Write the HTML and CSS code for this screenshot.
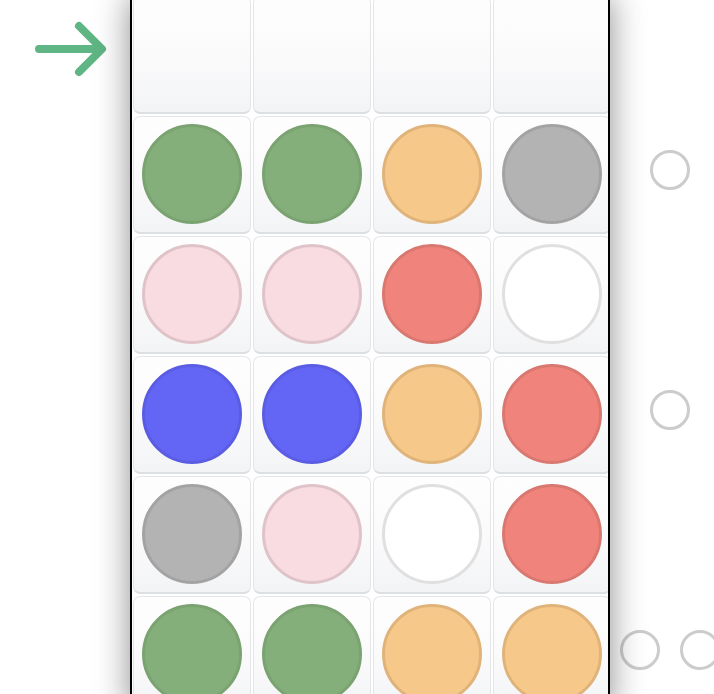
FILE: index.html
```html
<!DOCTYPE html>
<html lang="en">
<head>
<meta charset="utf-8">
<title>Mastermind</title>
<link rel="stylesheet" href="styles.css">
</head>
<body>
<div class="page">
  <div class="gutter">
    <svg class="arrow" width="80" height="60" viewBox="0 0 80 60" aria-hidden="true">
      <path d="M9 29 H71 M49 6 L72 29 L49 52" fill="none" stroke="#5fb583" stroke-width="8" stroke-linecap="round" stroke-linejoin="round"/>
    </svg>
  </div>
  <div class="board">
    <div class="grid">
      <div class="cell"></div><div class="cell"></div><div class="cell"></div><div class="cell"></div>

      <div class="cell"><span class="peg green"></span></div>
      <div class="cell"><span class="peg green"></span></div>
      <div class="cell"><span class="peg orange"></span></div>
      <div class="cell"><span class="peg gray"></span></div>

      <div class="cell"><span class="peg pink"></span></div>
      <div class="cell"><span class="peg pink"></span></div>
      <div class="cell"><span class="peg red"></span></div>
      <div class="cell"><span class="peg white"></span></div>

      <div class="cell"><span class="peg blue"></span></div>
      <div class="cell"><span class="peg blue"></span></div>
      <div class="cell"><span class="peg orange"></span></div>
      <div class="cell"><span class="peg red"></span></div>

      <div class="cell"><span class="peg gray"></span></div>
      <div class="cell"><span class="peg pink"></span></div>
      <div class="cell"><span class="peg white"></span></div>
      <div class="cell"><span class="peg red"></span></div>

      <div class="cell"><span class="peg green"></span></div>
      <div class="cell"><span class="peg green"></span></div>
      <div class="cell"><span class="peg orange"></span></div>
      <div class="cell"><span class="peg orange"></span></div>
    </div>
  </div>
  <div class="feedback">
    <div class="fb-row"></div>
    <div class="fb-row"><span class="hint"></span></div>
    <div class="fb-row"></div>
    <div class="fb-row"><span class="hint"></span></div>
    <div class="fb-row"></div>
    <div class="fb-row"><span class="hint"></span><span class="hint"></span></div>
  </div>
</div>
</body>
</html>
```

FILE: styles.css
```css
html, body {
  margin: 0;
  padding: 0;
  background: #ffffff;
  overflow: hidden;
  font-family: "Liberation Sans", Arial, sans-serif;
}

.page {
  display: flex;
  align-items: flex-start;
  width: 740px;
  margin-top: -4px;
}

.gutter {
  width: 130px;
  flex: none;
}

.arrow {
  display: block;
  margin: 24px 0 0 30px;
}

.board {
  flex: none;
  width: 476px;
  border-left: 2px solid #000;
  border-right: 2px solid #000;
  background: #ffffff;
  overflow: hidden;
  box-shadow: 0 0 32px rgba(0, 0, 0, 0.45);
  position: relative;
  z-index: 1;
}

.grid {
  display: grid;
  grid-template-columns: repeat(4, 118px);
  grid-auto-rows: 118px;
  gap: 2px;
  padding-left: 1px;
  width: 479px;
}

.cell {
  box-sizing: border-box;
  border: 1px solid #e3e5e9;
  border-bottom: 2px solid #dcdfe4;
  border-radius: 7px;
  background: linear-gradient(to bottom, #fefefe 0%, #fafafb 55%, #f3f4f6 100%);
  display: flex;
  align-items: center;
  justify-content: center;
}

.peg {
  box-sizing: border-box;
  width: 100px;
  height: 100px;
  border-radius: 50%;
  border: 3px solid;
  margin-bottom: 2px;
}

.green  { background: #84ae7a; border-color: #7ba372; }
.orange { background: #f6c98a; border-color: #dfb37a; }
.gray   { background: #b3b3b3; border-color: #a3a3a3; }
.pink   { background: #f8dce1; border-color: #dfc3c8; }
.red    { background: #f0847c; border-color: #d97870; }
.white  { background: #ffffff; border-color: #e0e0e0; }
.blue   { background: #6366f5; border-color: #5a5de2; }

.feedback {
  flex: none;
  width: 120px;
  display: flex;
  flex-direction: column;
  gap: 2px;
}

.fb-row {
  height: 118px;
  box-sizing: border-box;
  padding-bottom: 10px;
  display: flex;
  align-items: center;
  justify-content: center;
  gap: 20px;
}

.hint {
  box-sizing: border-box;
  width: 40px;
  height: 40px;
  border-radius: 50%;
  border: 3.5px solid #cccccc;
}
```
